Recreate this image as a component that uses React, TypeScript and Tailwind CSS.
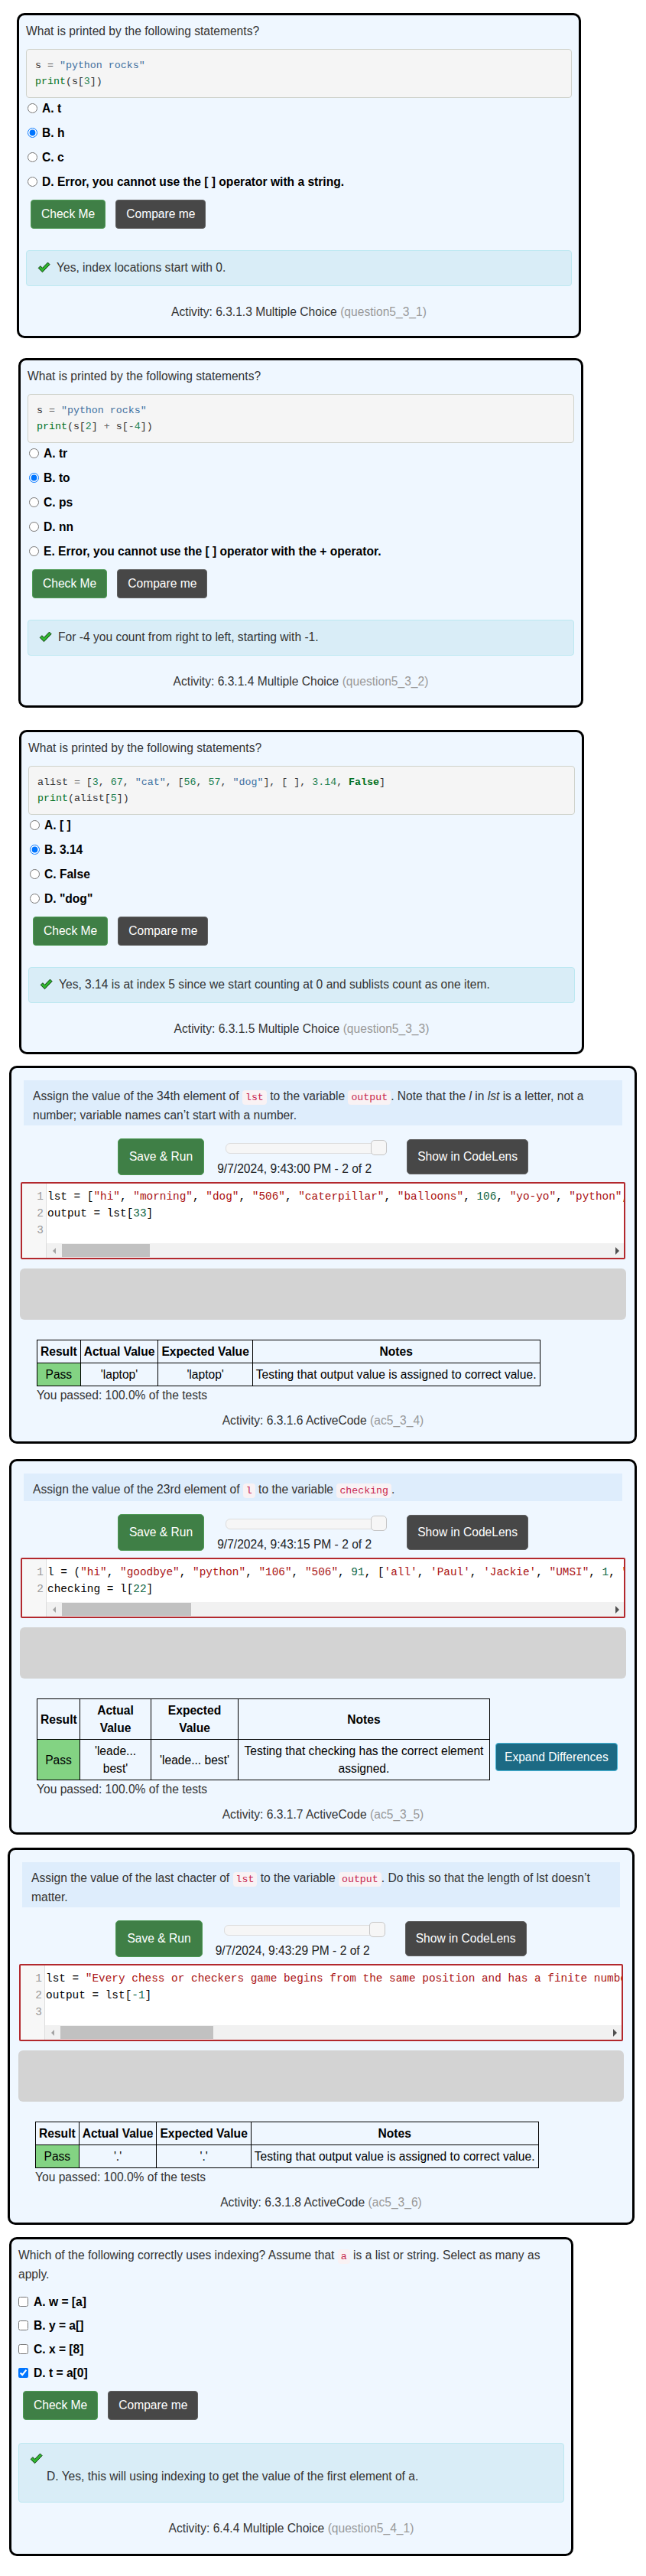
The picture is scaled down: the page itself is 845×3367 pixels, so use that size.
import React from "react";

type Tok = [string, string];

// pygments-ish colours for the static code blocks
const pn = "text-[#333333]";
const po = "text-[#666666]";
const ps = "text-[#4070a0]";
const pm = "text-[#208050]";
const pb = "text-[#007020]";
const pk = "font-bold text-[#007020]";

// codemirror colours for the editors
const cd = "text-black";
const cs = "text-[#aa1111]";
const cn = "text-[#116644]";

function CheckMark() {
  return (
    <svg width="17" height="15" viewBox="0 0 17 15" className="block shrink-0">
      <path
        d="M1.2 8.4 L3.9 5.7 L6.5 8.3 L13.5 1.1 L16.1 3.7 L6.5 13.7 Z"
        fill="#2fb52f"
        stroke="#123d12"
        strokeWidth="1"
        strokeLinejoin="round"
      />
    </svg>
  );
}

function CodeLine({ toks, h }: { toks: Tok[]; h: string }) {
  return (
    <div className={`${h} whitespace-pre`}>
      {toks.length === 0 ? " " : toks.map(([t, c], i) => (
        <span key={i} className={c}>
          {t}
        </span>
      ))}
    </div>
  );
}

function Code({ children }: { children: React.ReactNode }) {
  return (
    <code className="rounded-[4px] bg-[#f9f2f4] px-[4px] py-[2px] font-['Liberation_Mono',monospace] text-[13.25px] text-[#c7254e]">
      {children}
    </code>
  );
}

function Activity({ label, id }: { label: string; id: string }) {
  return (
    <p className="text-center leading-[23px] text-[#333333]">
      Activity: {label} <span className="text-[#999999]">({id})</span>
    </p>
  );
}

type Opt = { text: string; on?: boolean };

function MCCard(props: {
  pos: string;
  question: React.ReactNode;
  code?: Tok[][];
  opts: Opt[];
  multi?: boolean;
  feedback: string;
  label: string;
  id: string;
}) {
  const { pos, question, code, opts, multi, feedback, label, id } = props;
  return (
    <div className={`${pos} rounded-[10px] border-[3px] border-black bg-[#eff7ff] px-[9px] pt-[9px]`}>
      <div className="leading-[23px] text-[#333333]">{question}</div>

      {code && (
        <div className="mt-[12px] rounded-[4px] border border-[#cfd2cb] bg-[#f5f5f5] px-[11px] py-[10px] font-['Liberation_Mono',monospace] text-[13.3px] leading-[21px]">
          {code.map((l, i) => (
            <CodeLine key={i} toks={l} h="h-[21px]" />
          ))}
        </div>
      )}

      <div className={`${code ? "mt-[2px] gap-[9px]" : "mt-[13px] gap-[8px]"} flex flex-col`}>
        {opts.map((o) => (
          <div key={o.text} className={`${multi ? "" : "pl-[2px]"} flex h-[23px] items-center`}>
            <input
              type={multi ? "checkbox" : "radio"}
              checked={!!o.on}
              readOnly
              className="m-0 h-[13px] w-[13px]"
            />
            <span className={`${multi ? "ml-[7px]" : "ml-[6px]"} font-bold text-black`}>{o.text}</span>
          </div>
        ))}
      </div>

      <div className="ml-[6px] mt-[12px] flex gap-[13px]">
        <button className="h-[38px] rounded-[4px] border border-[#4f9a56] bg-[#3f7f46] px-[13px] text-white">
          Check Me
        </button>
        <button className="h-[38px] rounded-[4px] border border-[#606060] bg-[#474747] px-[13px] text-white">
          Compare me
        </button>
      </div>

      {multi ? (
        <div className="mt-[30px] rounded-[4px] border border-[#bce8f1] bg-[#d9edf7] pb-[22px] pl-[14px] pt-[12px] text-[#333333]">
          <CheckMark />
          <p className="mt-[4px] pl-[22px] leading-[23px]">{feedback}</p>
        </div>
      ) : (
        <div className="mt-[28px] flex items-center rounded-[4px] border border-[#bce8f1] bg-[#d9edf7] pb-[12px] pl-[14px] pt-[10px] leading-[23px] text-[#333333]">
          <CheckMark />
          <span className="ml-[8px]">{feedback}</span>
        </div>
      )}

      <div className="mt-[22px]">
        <Activity label={label} id={id} />
      </div>
    </div>
  );
}

type Result = {
  fixed?: boolean;
  actual: React.ReactNode;
  expected: string;
  note: React.ReactNode;
  headA: React.ReactNode;
  headE: React.ReactNode;
  expand?: boolean;
};

function ACCard(props: {
  pos: string;
  prompt: React.ReactNode;
  stamp: string;
  lines: Tok[][];
  thumb: string;
  res: Result;
  label: string;
  id: string;
}) {
  const { pos, prompt, stamp, lines, thumb, res, label, id } = props;
  const cell = "whitespace-nowrap border border-black px-[4px] py-[3px] text-center leading-[23px]";
  return (
    <div className={`${pos} rounded-[10px] border-[3px] border-black bg-[#eff7ff] px-[11px] pt-[16px] text-[#333333]`}>
      <div className="mx-[5px] bg-[#deedfc] px-[12px] pb-[2px] pt-[9px] leading-[23px]">{prompt}</div>

      <div className="mt-[17px] flex items-start justify-center">
        <button className="h-[48px] rounded-[5px] border border-[#4f9a56] bg-[#3f7f46] px-[14px] text-white">
          Save &amp; Run
        </button>
        <div className="ml-[17px] w-[223px] pt-[6px]">
          <div className="relative ml-[11px] h-[14px] w-[210px] rounded-[6px] border border-[#dddddd] bg-[#f6f6f6]">
            <div className="absolute right-[-2px] top-[-5px] h-[20px] w-[21px] rounded-[5px] border border-[#c5c5c5] bg-[#f6f6f6]" />
          </div>
          <div className="mt-[8px] whitespace-nowrap leading-[23px] text-[#222222]">{stamp}</div>
        </div>
        <button className="ml-[25px] mt-[1px] h-[46px] rounded-[5px] border border-[#606060] bg-[#474747] px-[13px] text-white">
          Show in CodeLens
        </button>
      </div>

      {/* editor */}
      <div className="mx-[1px] mt-[6px] flex overflow-hidden rounded-[2px] border-2 border-[#b3292e] bg-white font-['Liberation_Mono',monospace] text-[14.4px] leading-[22px]">
        <div className="w-[32px] shrink-0 border-r border-[#dddddd] bg-[#f7f7f7] pr-[3px] pt-[6px] text-right text-[#999999]">
          {lines.map((_, i) => (
            <div key={i} className="h-[22px]">
              {i + 1}
            </div>
          ))}
        </div>
        <div className="min-w-0 flex-1 overflow-hidden">
          <div className="pl-[1px] pt-[6px]">
            {lines.map((l, i) => (
              <CodeLine key={i} toks={l} h="h-[22px]" />
            ))}
          </div>
          <div className="mt-[6px] flex h-[19px] items-center bg-[#f1f1f1]">
            <div className="flex w-[20px] justify-center">
              <div className="h-0 w-0 border-y-[4px] border-r-[4px] border-y-transparent border-r-[#a3a3a3]" />
            </div>
            <div className={`${thumb} h-[17px] bg-[#c1c1c1]`} />
            <div className="flex-1" />
            <div className="flex w-[18px] justify-center">
              <div className="h-0 w-0 border-y-[5px] border-l-[5px] border-y-transparent border-l-[#505050]" />
            </div>
          </div>
        </div>
      </div>

      <div className="mt-[12px] h-[67px] rounded-[6px] bg-[#d3d3d3]" />

      <div className="ml-[22px] mt-[26px] flex items-start">
        <table className={`${res.fixed ? "w-[592px] table-fixed" : "table-auto"} shrink-0 border-collapse text-black`}>
          {res.fixed && (
            <colgroup>
              <col className="w-[56px]" />
              <col className="w-[93px]" />
              <col className="w-[114px]" />
              <col className="w-[329px]" />
            </colgroup>
          )}
          <thead>
            <tr className="font-bold">
              <th className={cell}>Result</th>
              <th className={cell}>{res.headA}</th>
              <th className={cell}>{res.headE}</th>
              <th className={cell}>Notes</th>
            </tr>
          </thead>
          <tbody>
            <tr>
              <td className={`${cell} bg-[#83d383]`}>Pass</td>
              <td className={cell}>{res.actual}</td>
              <td className={cell}>{res.expected}</td>
              <td className={cell}>{res.note}</td>
            </tr>
          </tbody>
        </table>
        {res.expand && (
          <button className="ml-[7px] mt-[58px] h-[37px] whitespace-nowrap rounded-[4px] border border-[#46b8da] bg-[#1c6a84] px-[11px] text-white">
            Expand Differences
          </button>
        )}
      </div>
      <p className="ml-[22px] leading-[23px]">You passed: 100.0% of the tests</p>

      <div className="mt-[10px]">
        <Activity label={label} id={id} />
      </div>
    </div>
  );
}

const Q = "What is printed by the following statements?";

export default function App() {
  return (
    <div className="w-full bg-white pb-[26px] pt-[17px] font-['Liberation_Sans',Arial,sans-serif] text-[15.6px]">
      <MCCard
        pos="ml-[22px] h-[425px] w-[738px]"
        question={Q}
        code={[
          [["s ", pn], ["=", po], [" ", pn], ['"python rocks"', ps]],
          [["print", pb], ["(s[", pn], ["3", pm], ["])", pn]],
        ]}
        opts={[
          { text: "A. t" },
          { text: "B. h", on: true },
          { text: "C. c" },
          { text: "D. Error, you cannot use the [ ] operator with a string." },
        ]}
        feedback="Yes, index locations start with 0."
        label="6.3.1.3 Multiple Choice"
        id="question5_3_1"
      />

      <MCCard
        pos="ml-[24px] mt-[26px] h-[457px] w-[739px]"
        question={Q}
        code={[
          [["s ", pn], ["=", po], [" ", pn], ['"python rocks"', ps]],
          [["print", pb], ["(s[", pn], ["2", pm], ["] ", pn], ["+", po], [" s[", pn], ["-", po], ["4", pm], ["])", pn]],
        ]}
        opts={[
          { text: "A. tr" },
          { text: "B. to", on: true },
          { text: "C. ps" },
          { text: "D. nn" },
          { text: "E. Error, you cannot use the [ ] operator with the + operator." },
        ]}
        feedback="For -4 you count from right to left, starting with -1."
        label="6.3.1.4 Multiple Choice"
        id="question5_3_2"
      />

      <MCCard
        pos="ml-[25px] mt-[29px] h-[424px] w-[739px]"
        question={Q}
        code={[
          [
            ["alist ", pn], ["=", po], [" [", pn], ["3", pm], [", ", pn], ["67", pm], [", ", pn],
            ['"cat"', ps], [", [", pn], ["56", pm], [", ", pn], ["57", pm], [", ", pn], ['"dog"', ps],
            ["], [ ], ", pn], ["3.14", pm], [", ", pn], ["False", pk], ["]", pn],
          ],
          [["print", pb], ["(alist[", pn], ["5", pm], ["])", pn]],
        ]}
        opts={[
          { text: "A. [ ]" },
          { text: "B. 3.14", on: true },
          { text: "C. False" },
          { text: 'D. "dog"' },
        ]}
        feedback="Yes, 3.14 is at index 5 since we start counting at 0 and sublists count as one item."
        label="6.3.1.5 Multiple Choice"
        id="question5_3_3"
      />

      <ACCard
        pos="ml-[12px] mt-[15px] h-[494px] w-[821px]"
        prompt={
          <>
            Assign the value of the 34th element of <Code>lst</Code> to the variable <Code>output</Code>. Note that
            the <i>l</i> in <i>lst</i> is a letter, not a number; variable names can’t start with a number.
          </>
        }
        stamp="9/7/2024, 9:43:00 PM - 2 of 2"
        lines={[
          [
            ["lst = [", cd], ['"hi"', cs], [", ", cd], ['"morning"', cs], [", ", cd], ['"dog"', cs], [", ", cd],
            ['"506"', cs], [", ", cd], ['"caterpillar"', cs], [", ", cd], ['"balloons"', cs], [", ", cd],
            ["106", cn], [", ", cd], ['"yo-yo"', cs], [", ", cd], ['"python"', cs], [", ", cd], ['"moose"', cs],
          ],
          [["output = lst[", cd], ["33", cn], ["]", cd]],
          [],
        ]}
        thumb="w-[115px]"
        res={{
          headA: "Actual Value",
          headE: "Expected Value",
          actual: "'laptop'",
          expected: "'laptop'",
          note: "Testing that output value is assigned to correct value.",
        }}
        label="6.3.1.6 ActiveCode"
        id="ac5_3_4"
      />

      <ACCard
        pos="ml-[12px] mt-[20px] h-[491px] w-[821px]"
        prompt={
          <>
            Assign the value of the 23rd element of <Code>l</Code> to the variable <Code>checking</Code>.
          </>
        }
        stamp="9/7/2024, 9:43:15 PM - 2 of 2"
        lines={[
          [
            ["l = (", cd], ['"hi"', cs], [", ", cd], ['"goodbye"', cs], [", ", cd], ['"python"', cs], [", ", cd],
            ['"106"', cs], [", ", cd], ['"506"', cs], [", ", cd], ["91", cn], [", [", cd], ["'all'", cs], [", ", cd],
            ["'Paul'", cs], [", ", cd], ["'Jackie'", cs], [", ", cd], ['"UMSI"', cs], [", ", cd], ["1", cn],
            [", ", cd], ['"Stephen"', cs],
          ],
          [["checking = l[", cd], ["22", cn], ["]", cd]],
        ]}
        thumb="w-[169px]"
        res={{
          fixed: true,
          headA: (
            <>
              Actual
              <br />
              Value
            </>
          ),
          headE: (
            <>
              Expected
              <br />
              Value
            </>
          ),
          actual: (
            <>
              'leade...
              <br />
              best'
            </>
          ),
          expected: "'leade... best'",
          note: (
            <>
              Testing that checking has the correct element
              <br />
              assigned.
            </>
          ),
          expand: true,
        }}
        label="6.3.1.7 ActiveCode"
        id="ac5_3_5"
      />

      <ACCard
        pos="ml-[10px] mt-[17px] h-[493px] w-[820px]"
        prompt={
          <>
            Assign the value of the last chacter of <Code>lst</Code> to the variable <Code>output</Code>. Do this so
            that the length of lst doesn’t matter.
          </>
        }
        stamp="9/7/2024, 9:43:29 PM - 2 of 2"
        lines={[
          [
            ["lst = ", cd],
            ['"Every chess or checkers game begins from the same position and has a finite number of moves."', cs],
          ],
          [["output = lst[", cd], ["-1", cn], ["]", cd]],
          [],
        ]}
        thumb="w-[200px]"
        res={{
          headA: "Actual Value",
          headE: "Expected Value",
          actual: "'.'",
          expected: "'.'",
          note: "Testing that output value is assigned to correct value.",
        }}
        label="6.3.1.8 ActiveCode"
        id="ac5_3_6"
      />

      <MCCard
        pos="ml-[12px] mt-[16px] h-[417px] w-[738px]"
        question={
          <>
            Which of the following correctly uses indexing? Assume that <Code>a</Code> is a list or string. Select as
            many as apply.
          </>
        }
        multi
        opts={[
          { text: "A. w = [a]" },
          { text: "B. y = a[]" },
          { text: "C. x = [8]" },
          { text: "D. t = a[0]", on: true },
        ]}
        feedback="D. Yes, this will using indexing to get the value of the first element of a."
        label="6.4.4 Multiple Choice"
        id="question5_4_1"
      />
    </div>
  );
}
